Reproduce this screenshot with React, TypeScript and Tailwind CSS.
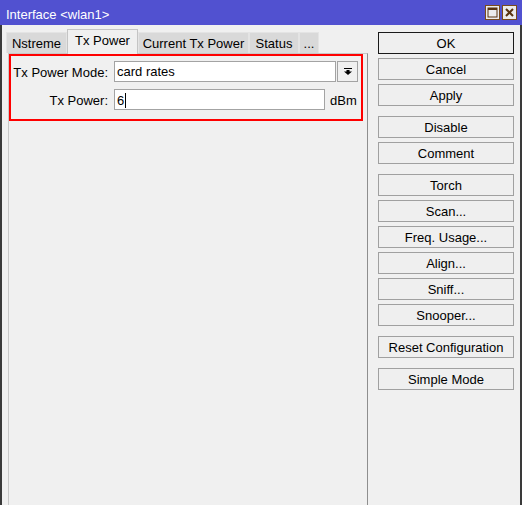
import React from "react";

const groups: string[][] = [
  ["OK", "Cancel", "Apply"],
  ["Disable", "Comment"],
  ["Torch", "Scan...", "Freq. Usage...", "Align...", "Sniff...", "Snooper..."],
  ["Reset Configuration"],
  ["Simple Mode"],
];

const tabs = [
  { label: "Nstreme", w: "w-[61px]" },
  { label: "Tx Power", w: "w-[71px]", active: true },
  { label: "Current Tx Power", w: "w-[111px]" },
  { label: "Status", w: "w-[50px]" },
  { label: "...", w: "w-[20px]" },
];

function TitleButtons() {
  return (
    <div className="flex gap-[2px]">
      {/* maximize */}
      <div className="w-[15px] h-[15px] border border-[#7a4b1c] bg-[#ececec] flex items-center justify-center">
        <svg width="11" height="11" viewBox="0 0 11 11">
          <rect x="1" y="1" width="9" height="9" fill="none" stroke="#5a3410" strokeWidth="1" />
          <rect x="1" y="1" width="9" height="2" fill="#5a3410" />
        </svg>
      </div>
      {/* close */}
      <div className="w-[15px] h-[15px] border border-[#7a4b1c] bg-[#ececec] flex items-center justify-center">
        <svg width="11" height="11" viewBox="0 0 11 11">
          <path d="M2 2 L9 9 M9 2 L2 9" stroke="#5a3410" strokeWidth="2" />
        </svg>
      </div>
    </div>
  );
}

export default function App() {
  return (
    <div className="w-[522px] h-[505px] bg-[#f0f0f0] flex flex-col overflow-hidden text-[13px] text-black font-['Liberation_Sans',Arial,sans-serif]">
      {/* title bar */}
      <div className="h-[25px] shrink-0 bg-[#5151d0] flex items-center pl-[6px] pr-[5px] text-white">
        <span className="flex-1 pt-[5px]">Interface &lt;wlan1&gt;</span>
        <TitleButtons />
      </div>

      <div className="flex-1 flex border-l-2 border-r-2 border-[#3a3a3a]">
        {/* left side: tabs + panel */}
        <div className="w-[366px] pl-[6px] flex flex-col">
          <div className="h-[28px] flex items-end -ml-[2px]">
            {tabs.map((t) =>
              t.active ? (
                <div
                  key={t.label}
                  className={`${t.w} h-[25px] -mb-px relative z-10 bg-[#f0f0f0] border-l border-t border-r border-[#c4c4c4] flex items-center justify-center pb-[2px]`}
                >
                  {t.label}
                </div>
              ) : (
                <div
                  key={t.label}
                  className={`${t.w} h-[21px] bg-[#d9d9d9] border-l border-t border-r border-[#e4e4e4] flex items-center justify-center pt-px`}
                >
                  {t.label}
                </div>
              )
            )}
          </div>

          <div className="flex-1 border-t border-l border-[#c8c8c8] border-r border-r-[#8e8e8e]">
            <div className="w-[354px] border-2 border-[#ff0000] pt-[5px] pb-[9px] flex flex-col gap-[8px]">
              <div className="flex items-center h-[20px]">
                <div className="w-[97px] text-right pt-[3px]">Tx Power Mode:</div>
                <div className="ml-[6px] w-[222px] h-[21px] bg-white border border-[#a3a3a3] flex items-center pl-[2px] pt-[2px]">
                  card rates
                </div>
                <div className="ml-px w-[21px] h-[21px] border border-[#a3a3a3] bg-[#f0f0f0] flex items-center justify-center">
                  <svg width="8" height="7" viewBox="0 0 8 7">
                    <rect x="0" y="0" width="8" height="1" fill="#000" />
                    <rect x="2.5" y="2" width="3" height="2" fill="#000" />
                    <path d="M0 3.5 H8 L4 7 Z" fill="#000" />
                  </svg>
                </div>
              </div>
              <div className="flex items-center h-[21px]">
                <div className="w-[97px] text-right pt-[3px]">Tx Power:</div>
                <div className="ml-[6px] w-[211px] h-[21px] bg-white border border-[#a3a3a3] flex items-center pl-[2px] pt-[2px]">
                  <span className="border-r border-black pr-px leading-[15px]">6</span>
                </div>
                <div className="ml-[5px] pt-[3px]">dBm</div>
              </div>
            </div>
          </div>
        </div>

        {/* right side: buttons */}
        <div className="flex-1 pl-[10px] pt-[7px] flex flex-col gap-[10px]">
          {groups.map((g, i) => (
            <div key={i} className="flex flex-col gap-[4px]">
              {g.map((b) => (
                <div
                  key={b}
                  className={`w-[136px] h-[22px] flex items-center justify-center bg-[#efefef] border pt-[2px] ${
                    b === "OK" ? "border-[#1a1a1a]" : "border-[#a0a0a0]"
                  }`}
                >
                  {b}
                </div>
              ))}
            </div>
          ))}
        </div>
      </div>
    </div>
  );
}
